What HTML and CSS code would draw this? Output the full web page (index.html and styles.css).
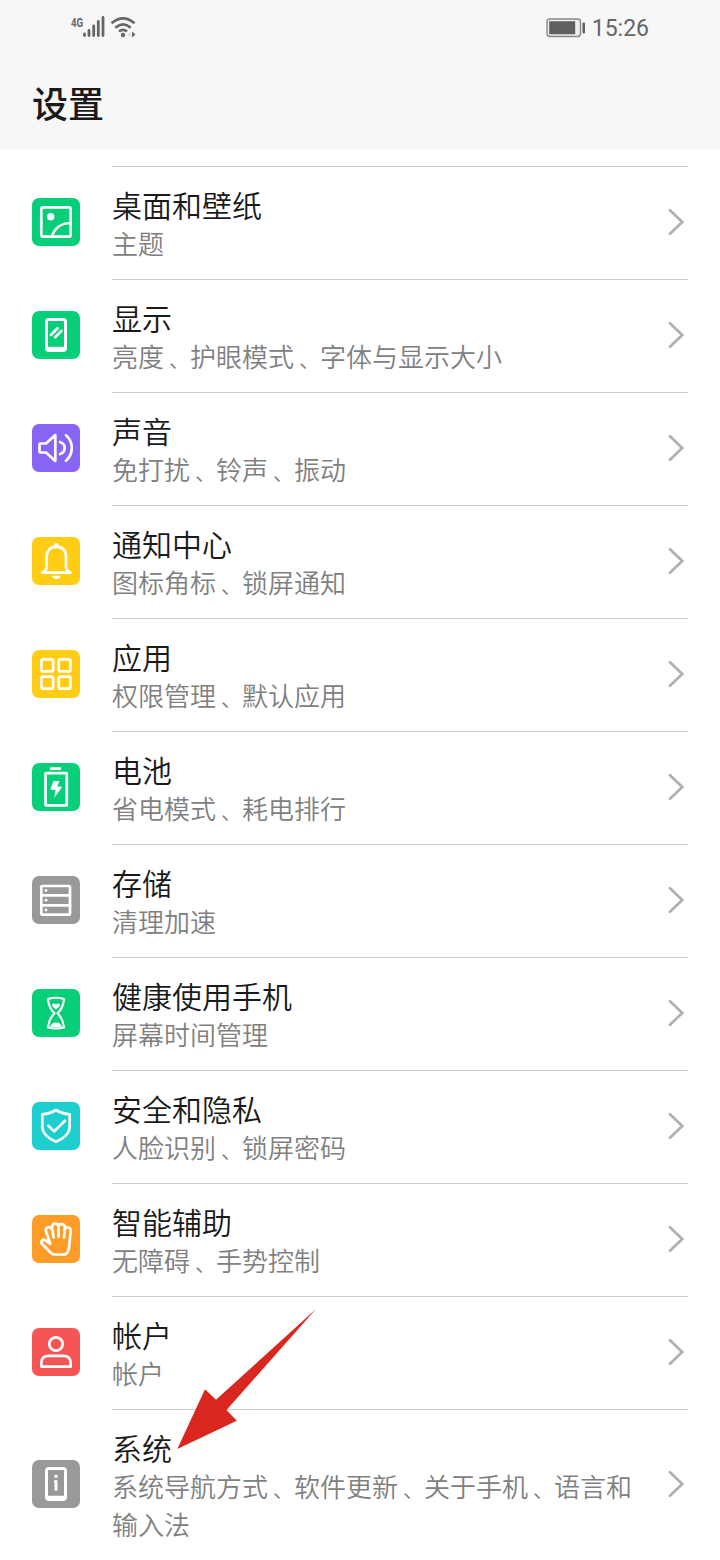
FILE: index.html
```html
<!DOCTYPE html>
<html lang="zh-CN">
<head>
<meta charset="utf-8">
<title>设置</title>
<link rel="stylesheet" href="styles.css">
</head>
<body>
<div class="screen">
  <header class="header">
    <div class="status">
      <div class="status-left">
        <span class="net">4G</span>
        <svg class="signal" width="24" height="24" viewBox="0 0 24 24"><path d="M2.500 19v1.500M7 15.500v5M11.700 11v9.500M16.300 6.500v14M21 2.500v18" /></svg>
        <svg class="wifi" width="28" height="24" viewBox="0 0 28 24"><path d="M1.500 7.300Q13-2.500 24.500 7.300M5.300 11.700Q13 5 20.700 11.700M9 15.600Q13 12 17 15.600"/><circle cx="13" cy="19" r="2.200"/><path class="wifi-off" d="M20.500 15.500v6l-3-3z"/><path class="wifi-on" d="M22 15.500v6l3.500-3z"/></svg>
      </div>
      <div class="status-right">
        <svg width="40" height="20" viewBox="0 0 40 20"><rect class="shell" x="1" y="1" width="33.500" height="17.500" rx="3"/><rect class="charge" x="3.200" y="3.200" width="26" height="13" rx=".5"/><rect class="charge" x="36.500" y="4.500" width="2.500" height="11" rx="1"/></svg>
        <span class="time">15:26</span>
      </div>
    </div>
    <h1 class="title">设置</h1>
  </header>
  <main class="list">
    <div class="row">
      <svg class="icon green" viewBox="0 0 48 48"><rect x="9.300" y="9.300" width="29.400" height="29.400" rx="2"/><circle class="solid" cx="18.700" cy="18.700" r="3.700"/><path d="M20 38.500C22.500 30 29.500 25 38.700 25"/></svg>
      <div class="body"><div class="text"><div class="name">桌面和壁纸</div><div class="desc">主题</div></div><svg class="chevron" viewBox="0 0 16 28"><path d="M2 2.300 14.200 14 2 25.700"/></svg></div>
    </div>
    <div class="row">
      <svg class="icon green" viewBox="0 0 48 48"><path class="solid" fill-rule="evenodd" d="M17 7h14a4 4 0 0 1 4 4v26a4 4 0 0 1-4 4H17a4 4 0 0 1-4-4V11a4 4 0 0 1 4-4zm0 3a1 1 0 0 0-1 1v24.700h16V11a1 1 0 0 0-1-1z"/><path d="M19 24l6.500-6.700M23.200 26.300l6.200-6.400"/></svg>
      <div class="body"><div class="text"><div class="name">显示</div><div class="desc">亮度<span class="sep">、</span>护眼模式<span class="sep">、</span>字体与显示大小</div></div><svg class="chevron" viewBox="0 0 16 28"><path d="M2 2.300 14.200 14 2 25.700"/></svg></div>
    </div>
    <div class="row">
      <svg class="icon purple" viewBox="0 0 48 48"><path d="M8.500 19.500H14l9.300-8.500v26L14 28.500H8.500q-1 0-1-1v-7q0-1 1-1zM28 18q4.600 1.500 4.600 6t-4.600 6M34 11.300q5.800 5 5.800 12.700T34 36.700"/></svg>
      <div class="body"><div class="text"><div class="name">声音</div><div class="desc">免打扰<span class="sep">、</span>铃声<span class="sep">、</span>振动</div></div><svg class="chevron" viewBox="0 0 16 28"><path d="M2 2.300 14.200 14 2 25.700"/></svg></div>
    </div>
    <div class="row">
      <svg class="icon yellow" viewBox="0 0 48 48"><path d="M10.200 35.700h28.200M11.500 35.200q3.200-2 3.200-6v-9.500Q15 10 24.300 9.700 33.700 10 34 19.700v9.500q0 4 3.200 6"/><circle class="solid" cx="24.300" cy="8.300" r="2.300"/><path class="solid" d="M20 38.700h8.700q-1 3.300-4.350 3.300T20 38.700z"/></svg>
      <div class="body"><div class="text"><div class="name">通知中心</div><div class="desc">图标角标<span class="sep">、</span>锁屏通知</div></div><svg class="chevron" viewBox="0 0 16 28"><path d="M2 2.300 14.200 14 2 25.700"/></svg></div>
    </div>
    <div class="row">
      <svg class="icon yellow" viewBox="0 0 48 48"><rect x="9.400" y="9.400" width="11.800" height="12" rx="2"/><rect x="26.700" y="9.400" width="11.800" height="12" rx="2"/><rect x="9.400" y="26.700" width="11.800" height="12" rx="2"/><rect x="26.700" y="26.700" width="11.800" height="12" rx="2"/></svg>
      <div class="body"><div class="text"><div class="name">应用</div><div class="desc">权限管理<span class="sep">、</span>默认应用</div></div><svg class="chevron" viewBox="0 0 16 28"><path d="M2 2.300 14.200 14 2 25.700"/></svg></div>
    </div>
    <div class="row">
      <svg class="icon green" viewBox="0 0 48 48"><rect class="solid" x="18" y="4.200" width="11.200" height="2.900" rx="1.200"/><rect x="13.500" y="10.200" width="21.300" height="32.200" rx=".6"/><path class="solid" d="M21.500 18h6l-2.300 5.300 5 .7-8 10.700 1.300-7.700-5.200-.5z"/></svg>
      <div class="body"><div class="text"><div class="name">电池</div><div class="desc">省电模式<span class="sep">、</span>耗电排行</div></div><svg class="chevron" viewBox="0 0 16 28"><path d="M2 2.300 14.200 14 2 25.700"/></svg></div>
    </div>
    <div class="row">
      <svg class="icon gray" viewBox="0 0 48 48"><rect x="9.300" y="10" width="28.700" height="28.700" rx="1"/><path d="M9.300 19.300H38M9.300 29.300H38"/><circle class="solid" cx="14" cy="14.400" r="1.400"/><circle class="solid" cx="14" cy="24.200" r="1.400"/><circle class="solid" cx="14" cy="34" r="1.400"/></svg>
      <div class="body"><div class="text"><div class="name">存储</div><div class="desc">清理加速</div></div><svg class="chevron" viewBox="0 0 16 28"><path d="M2 2.300 14.200 14 2 25.700"/></svg></div>
    </div>
    <div class="row">
      <svg class="icon green thin" viewBox="0 0 48 48"><path d="M16 10q8-2.500 16 0-.5 8.500-6.500 14.300Q31.500 30.500 32 38.500q-8 2-16 0 .5-8 6.500-14.200Q16.500 18.500 16 10z"/><path class="solid" d="M24 20.500l-3.600-3.200q-1-2.300 1.300-2.800 1.700 0 2.300 1.200.6-1.200 2.300-1.200 2.300.5 1.300 2.800zM18 37.500q2-4 6-4t6 4q-6 1.500-12 0z"/></svg>
      <div class="body"><div class="text"><div class="name">健康使用手机</div><div class="desc">屏幕时间管理</div></div><svg class="chevron" viewBox="0 0 16 28"><path d="M2 2.300 14.200 14 2 25.700"/></svg></div>
    </div>
    <div class="row">
      <svg class="icon cyan" viewBox="0 0 48 48"><path d="M24 8q5.500 3.500 13.700 4.300V26Q37 34 24 39.800 11 34 10.300 26V12.300Q18.500 11.500 24 8zM16.300 23.700l5.900 5.700L33 18.700"/></svg>
      <div class="body"><div class="text"><div class="name">安全和隐私</div><div class="desc">人脸识别<span class="sep">、</span>锁屏密码</div></div><svg class="chevron" viewBox="0 0 16 28"><path d="M2 2.300 14.200 14 2 25.700"/></svg></div>
    </div>
    <div class="row">
      <svg class="icon orange" viewBox="0 0 48 48"><path d="M18.300 28.800 13.900 16.300C12.800 12.500 17.600 10.500 19.300 14M21.600 22.500 20 12.500C19.800 7.600 26 7.600 26.500 11.500V22M26.500 11.500C27.500 7.800 33 8.300 32.800 12.800L32 22.500M32.800 14.500C34 11.200 38.900 12 38.700 15.800L37 32.500Q36 39.500 32 39.500H22.500Q20.500 39.500 18.500 37.500L10 28.800C8 26.300 11 23.500 13.500 25.300L18.300 28.800"/></svg>
      <div class="body"><div class="text"><div class="name">智能辅助</div><div class="desc">无障碍<span class="sep">、</span>手势控制</div></div><svg class="chevron" viewBox="0 0 16 28"><path d="M2 2.300 14.200 14 2 25.700"/></svg></div>
    </div>
    <div class="row">
      <svg class="icon red" viewBox="0 0 48 48"><circle cx="24" cy="16" r="6.700"/><path d="M9.300 38.600v-4q.5-6.700 7.500-6.700h14.400q7 0 7.500 6.700v4z"/></svg>
      <div class="body"><div class="text"><div class="name">帐户</div><div class="desc">帐户</div></div><svg class="chevron" viewBox="0 0 16 28"><path d="M2 2.300 14.200 14 2 25.700"/></svg></div>
    </div>
    <div class="row">
      <svg class="icon gray" viewBox="0 0 48 48"><path class="solid" fill-rule="evenodd" d="M17 7h14a4 4 0 0 1 4 4v26a4 4 0 0 1-4 4H17a4 4 0 0 1-4-4V11a4 4 0 0 1 4-4zm0 3a1 1 0 0 0-1 1v24.700h16V11a1 1 0 0 0-1-1z"/><circle class="solid" cx="24" cy="16.200" r="1.700"/><path class="solid" d="M22 20.200h3.500v10.600H22.500v-8.300H22z"/></svg>
      <div class="body"><div class="text"><div class="name">系统</div><div class="desc">系统导航方式<span class="sep">、</span>软件更新<span class="sep">、</span>关于手机<span class="sep">、</span>语言和输入法</div></div><svg class="chevron" viewBox="0 0 16 28"><path d="M2 2.300 14.200 14 2 25.700"/></svg></div>
    </div>
  </main>
  <svg class="arrow" viewBox="0 0 139 141"><path d="M.3 140 28 80.300l11 10.400L139 0 49.500 101l10.300 10.700z"/></svg>
</div>
</body>
</html>
```
FILE: styles.css
```css
* { box-sizing: border-box; }
body {
  margin: 0;
  background: #fff;
  font-family: "Noto Sans CJK SC", sans-serif;
}
.screen {
  position: relative;
  width: 720px;
  height: 1560px;
  overflow: hidden;
}
.header {
  height: 150px;
  background: #f7f7f7;
}
.status {
  display: flex;
  justify-content: space-between;
  height: 56px;
  padding: 0 71px;
  color: #666;
}
.status svg { display: block; }
.status-left {
  display: flex;
  padding-top: 16px;
}
.net {
  width: 11px;
  font: 700 13.500px/12px "Roboto", sans-serif;
  transform: scaleX(.72);
  transform-origin: left;
  height: 12px;
}
.signal path {
  stroke: #666;
  stroke-width: 2.800;
  stroke-linecap: round;
}
.signal { margin-top: -1px; }
.wifi { margin-left: 4px; }
.wifi path {
  fill: none;
  stroke: #666;
  stroke-width: 2.700;
}
.wifi circle { fill: #666; }
.wifi .wifi-off { fill: #ddd; stroke: none; }
.wifi .wifi-on { fill: #666; stroke: none; }
.status-right {
  display: flex;
  align-items: center;
  gap: 6px;
}
.shell {
  fill: #eee;
  stroke: #888;
  stroke-width: 1.400;
}
.charge { fill: #606060; }
.time {
  padding-top: 1px;
  font: 400 23px/28px "Roboto", sans-serif;
}
.title {
  margin: 0;
  padding: 20px 32px 0;
  font-size: 36px;
  line-height: 52px;
  font-weight: 500;
  color: #1a1a1a;
}
.list { padding: 16px 32px 0; }
.row {
  display: flex;
  align-items: center;
  gap: 32px;
}
.icon {
  flex: none;
  width: 48px;
  height: 48px;
  margin-top: -1px;
  border-radius: 7px;
  fill: none;
  stroke: #fff;
  stroke-width: 2.700;
  stroke-linecap: round;
  stroke-linejoin: round;
}
.icon .solid { fill: #fff; stroke: none; }
.thin { stroke-width: 2.200; }
.green { background: #07ce78; }
.purple { background: #8864f5; }
.yellow { background: #ffce14; }
.gray { background: #999; }
.cyan { background: #1ccfce; }
.orange { background: #ff9b27; }
.red { background: #f55555; }
.body {
  flex: 1;
  display: flex;
  align-items: center;
  justify-content: space-between;
  padding: 18px 4px 17px 0;
  border-top: 1px solid #ccc;
}
.text {
  width: 530px;
  font-weight: 350;
}
.name {
  font-size: 30px;
  line-height: 38px;
  color: #1a1a1a;
}
.desc {
  margin-top: 1px;
  font-size: 26px;
  line-height: 38px;
  color: #808080;
}
/* small enumeration comma, set towards the middle of a full-width cell */
.sep {
  display: inline-block;
  width: 26px;
  padding-left: 5px;
  font-size: 21px;
  line-height: 1;
}
.chevron {
  flex: none;
  width: 16px;
  height: 28px;
  margin-top: -3px;
  fill: none;
  stroke: #b0b0b0;
  stroke-width: 2.700;
  stroke-linecap: round;
}
.arrow {
  position: absolute;
  left: 177px;
  top: 1309px;
  width: 139px;
  height: 141px;
  fill: #d9261e;
}
```
